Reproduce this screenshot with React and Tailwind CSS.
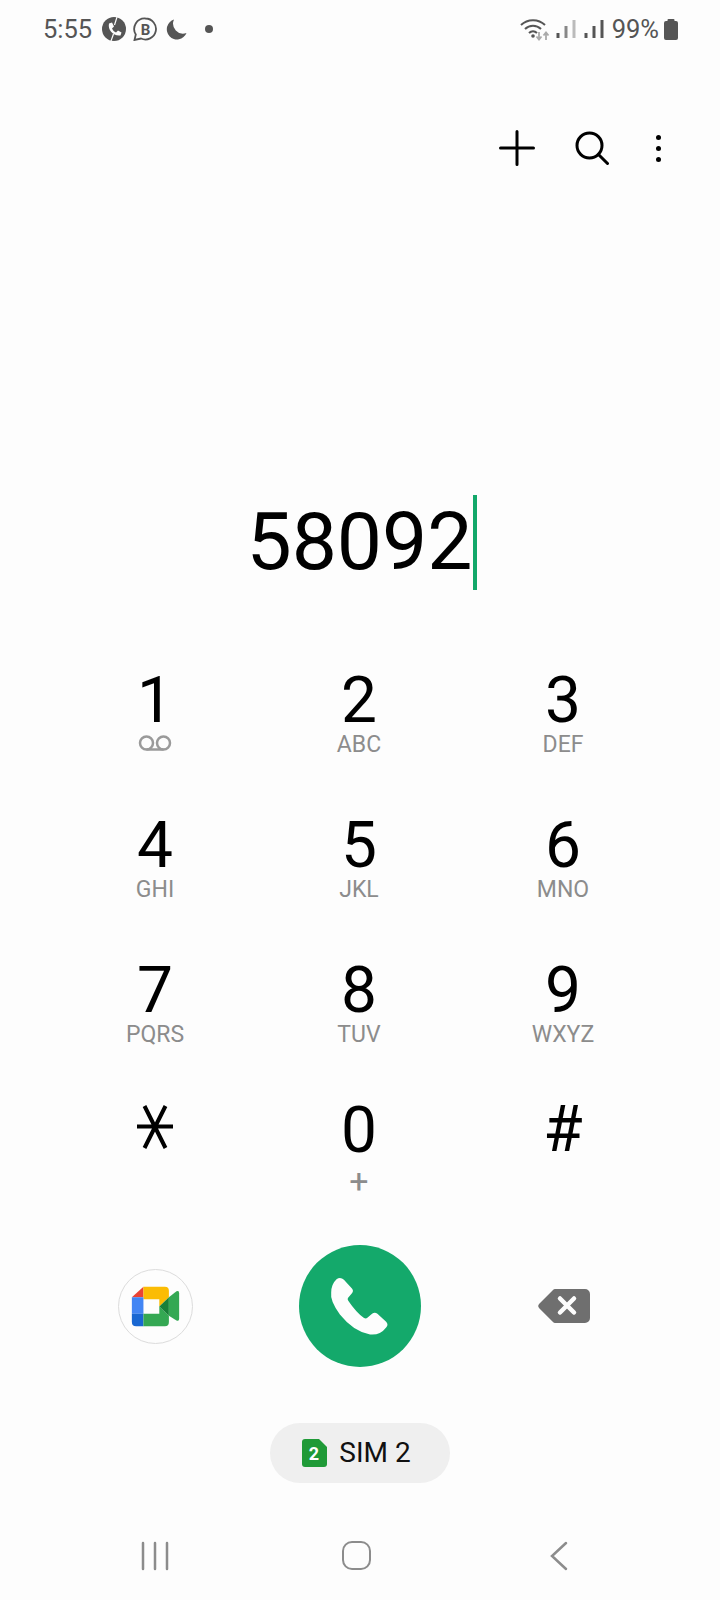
import React from "react";

const keys = [
  { d: "1", voicemail: true },
  { d: "2", l: "ABC" },
  { d: "3", l: "DEF" },
  { d: "4", l: "GHI" },
  { d: "5", l: "JKL" },
  { d: "6", l: "MNO" },
  { d: "7", l: "PQRS" },
  { d: "8", l: "TUV" },
  { d: "9", l: "WXYZ" },
  { star: true },
  { d: "0", plus: true },
  { d: "#", hash: true },
];

function Star() {
  return (
    <svg width="40" height="46" viewBox="0 0 40 46" stroke="#000" strokeWidth="4" fill="none">
      <path d="M2 22.500H38M9.500 2L30.500 44M30.500 2L9.500 44" />
    </svg>
  );
}

function Voicemail() {
  return (
    <svg width="34" height="18" viewBox="0 0 34 18" fill="none" stroke="#9a9a9a" strokeWidth="2.500">
      <circle cx="8.500" cy="9" r="6.500" />
      <circle cx="25.500" cy="9" r="6.500" />
      <path d="M8.500 15.500H25.500" />
    </svg>
  );
}

function Key({ k }) {
  if (k.star) {
    return (
      <div className="h-[145px] flex justify-center -mt-[1px]">
        <Star />
      </div>
    );
  }
  const top = k.plus ? "-mt-[5px]" : k.hash ? "-mt-[6px]" : "";
  return (
    <div className="h-[145px] flex flex-col items-center">
      <div className={`text-[64px] leading-[62px] text-black ${top}`}>{k.d}</div>
      {k.voicemail && (
        <div className="mt-[2px]">
          <Voicemail />
        </div>
      )}
      {k.l && <div className="text-[23px] leading-[24px] mt-[1px] text-[#8c8c8c]">{k.l}</div>}
      {k.plus && <div className="text-[34px] leading-[34px] mt-[2px] text-[#8c8c8c]">+</div>}
    </div>
  );
}

function Signal({ dim }) {
  return (
    <svg width="20" height="24" viewBox="0 0 20 24" fill="none" strokeWidth="3">
      <path d="M2 21V16" stroke="#555" />
      <path d="M10 21V9" stroke={dim ? "#888" : "#555"} />
      <path d="M18 21V3" stroke={dim ? "#bbb" : "#555"} />
    </svg>
  );
}

function StatusBar() {
  return (
    <div className="h-[58px] flex items-center justify-between pl-[43px] pr-[42px] text-[#555] text-[25.500px]">
      <div className="flex items-center">
        <span className="leading-[60px]">5:55</span>
        <svg className="ml-[10px]" width="24" height="24" viewBox="0 0 24 24">
          <circle cx="12" cy="12" r="12" fill="#555" />
          <path d="M7 6.500L10 5.500l2 4-2 2c1 2 2 3 4 4l2-2 3.500 2-1 3c-7 1-13-5.500-11.500-12z" fill="#fdfdfd" />
          <path d="M15 0L12.500 8M9 24L11.500 17" stroke="#fdfdfd" strokeWidth="1.200" />
        </svg>
        <svg className="ml-[7px]" width="24" height="24" viewBox="0 0 24 24" fill="none">
          <path d="M12.500 1.500a10.500 10.500 0 1 1-4.500 20L1.500 23l1.300-5.500A10.500 10.500 0 0 1 12.500 1.500z" stroke="#555" strokeWidth="1.800" />
          <text x="12.500" y="17.500" textAnchor="middle" fontSize="15" fontWeight="700" fill="#555" fontFamily="Roboto, sans-serif">B</text>
        </svg>
        <svg className="ml-[9px]" width="21" height="21" viewBox="0 0 21 21">
          <path d="M8 0.500A10 10 0 0 0 20.500 14 10.200 10.200 0 1 1 8 0.500z" fill="#555" />
        </svg>
        <span className="ml-[18px] w-[8px] h-[8px] rounded-full bg-[#555]" />
      </div>
      <div className="flex items-center">
        <svg width="30" height="24" viewBox="0 0 30 24" fill="none">
          <path d="M1 8C7.500 1.500 18.500 1.500 25 8M5 12c4.500-4.500 11.500-4.500 16 0M9 16c2.500-2.500 5.500-2.500 8 0" stroke="#555" strokeWidth="2" />
          <circle cx="13" cy="19" r="1.800" fill="#555" />
          <path d="M19 15V22M16.500 19.500L19 22.500L21.500 19.500" stroke="#aaa" strokeWidth="1.800" />
          <path d="M26 23V16M23.500 18.500L26 15.500L28.500 18.500" stroke="#aaa" strokeWidth="1.800" />
        </svg>
        <div className="ml-[6px]"><Signal dim /></div>
        <div className="ml-[8px]"><Signal /></div>
        <span className="ml-[8px] leading-[60px]">99%</span>
        <svg className="ml-[5px]" width="14" height="21" viewBox="0 0 14 21">
          <path d="M4.500 0h5a1 1 0 0 1 1 1v1H12a2 2 0 0 1 2 2v15a2 2 0 0 1-2 2H2a2 2 0 0 1-2-2V4a2 2 0 0 1 2-2h1.500V1a1 1 0 0 1 1-1z" fill="#555" />
        </svg>
      </div>
    </div>
  );
}

function MeetIcon() {
  return (
    <svg width="49" height="41" viewBox="93 138 147 124">
      <path d="M130 140L95 172H130Z" fill="#ea4335" />
      <path d="M130 140H195Q207 140 207 152V172L178 200V178H130Z" fill="#fbbc04" />
      <path d="M95 172H130V222H95Z" fill="#4285f4" />
      <path d="M95 222H130V260H108Q95 260 95 247Z" fill="#1967d2" />
      <path d="M130 222H178V200L207 228V247Q207 260 195 260H130Z" fill="#34a853" />
      <path d="M178 200L207 172V228Z" fill="#188038" />
      <path d="M207 172L230 154Q238 150 238 160V236Q238 246 230 242L207 228Z" fill="#34a853" />
    </svg>
  );
}

function PhoneIcon() {
  return (
    <svg className="w-full h-full" viewBox="28 28 364 364">
      <path
        d="M140 130Q152 122 162 132L186 158Q192 165 186 172L174 186Q172 190 175 194Q198 228 222 246Q228 249 232 245L246 233Q254 227 262 233L288 257Q296 266 288 274Q270 298 240 295Q190 285 150 235Q120 195 124 170Q124 145 140 130Z"
        fill="#fdfdfd"
      />
    </svg>
  );
}

export default function App() {
  return (
    <div className="w-[720px] h-[1600px] bg-[#fdfdfd] flex flex-col font-['Roboto',sans-serif] overflow-hidden">
      <StatusBar />

      {/* acciones */}
      <div className="h-[64px] mt-[58px] flex items-center justify-end pr-[59px]">
        <svg width="36" height="36" viewBox="0 0 36 36" stroke="#000" strokeWidth="3" strokeLinecap="round">
          <path d="M1.500 18H34.500M18 1.500V34.500" />
        </svg>
        <svg className="ml-[40px]" width="34" height="34" viewBox="0 0 34 34" fill="none" stroke="#000" strokeWidth="3" strokeLinecap="round">
          <circle cx="14.500" cy="14.500" r="12.500" />
          <path d="M23.500 23.500L32.500 32.500" />
        </svg>
        <div className="ml-[47px] flex flex-col gap-[6px]">
          <span className="w-[5px] h-[5px] rounded-full bg-black" />
          <span className="w-[5px] h-[5px] rounded-full bg-black" />
          <span className="w-[5px] h-[5px] rounded-full bg-black" />
        </div>
      </div>

      {/* numero */}
      <div className="mt-[314px] h-[96px] pl-[3px] flex items-center justify-center">
        <span className="text-[80.500px] leading-[96px] text-black">58092</span>
        <span className="w-[4px] h-[95px] bg-[#12a86a]" />
      </div>

      {/* teclado */}
      <div className="mt-[80px] pl-[53px] grid grid-cols-[204px_204px_204px]">
        {keys.map((k, i) => (
          <Key key={i} k={k} />
        ))}
      </div>

      {/* llamada */}
      <div className="-mt-[5px] pl-[54px] grid grid-cols-[204px_204px_204px] items-center">
        <div className="flex justify-center -ml-[1px]">
          <div className="w-[75px] h-[75px] rounded-full border border-[#dcdcdc] flex items-center justify-center">
            <MeetIcon />
          </div>
        </div>
        <div className="flex justify-center">
          <div className="w-[122px] h-[122px] rounded-full bg-[#14a96b]">
            <PhoneIcon />
          </div>
        </div>
        <div className="flex justify-center">
          <svg width="54" height="36" viewBox="0 0 54 36">
            <path d="M18 1H48a5 5 0 0 1 5 5V30a5 5 0 0 1-5 5H18a3 3 0 0 1-2-1L2 20a3 3 0 0 1 0-4L16 2a3 3 0 0 1 2-1z" fill="#6f6f6f" />
            <path d="M23 10.500L37 24.500M37 10.500L23 24.500" stroke="#fdfdfd" strokeWidth="4.500" strokeLinecap="round" />
          </svg>
        </div>
      </div>

      {/* sim */}
      <div className="mt-[56px] flex justify-center">
        <div className="w-[180px] h-[60px] pr-[7px] rounded-full bg-[#efefef] flex items-center justify-center">
          <svg width="25" height="28" viewBox="0 0 25 28">
            <path d="M3 0H17L25 8V25a3 3 0 0 1-3 3H3a3 3 0 0 1-3-3V3a3 3 0 0 1 3-3z" fill="#1f9a37" />
            <text x="12" y="20.500" textAnchor="middle" fontSize="18" fontWeight="700" fill="#fff" fontFamily="Roboto, sans-serif">2</text>
          </svg>
          <span className="ml-[12px] text-[28px] text-[#111]">SIM 2</span>
        </div>
      </div>

      {/* navegacion */}
      <div className="mt-[58px] pl-[53px] grid grid-cols-[204px_204px_204px]">
        <div className="flex justify-center">
          <svg width="28" height="30" viewBox="0 0 28 30" stroke="#8c8c8c" strokeWidth="2.500" strokeLinecap="round">
            <path d="M2 2V28M14 2V28M26 2V28" />
          </svg>
        </div>
        <div className="flex justify-center -ml-[6px]">
          <div className="w-[29px] h-[29px] rounded-[10px] border-[2.500px] border-[#8c8c8c]" />
        </div>
        <div className="flex justify-center -ml-[8px]">
          <svg width="18" height="30" viewBox="0 0 18 30" fill="none" stroke="#8c8c8c" strokeWidth="2.500" strokeLinecap="round">
            <path d="M16 2L2 15L16 28" />
          </svg>
        </div>
      </div>
    </div>
  );
}
